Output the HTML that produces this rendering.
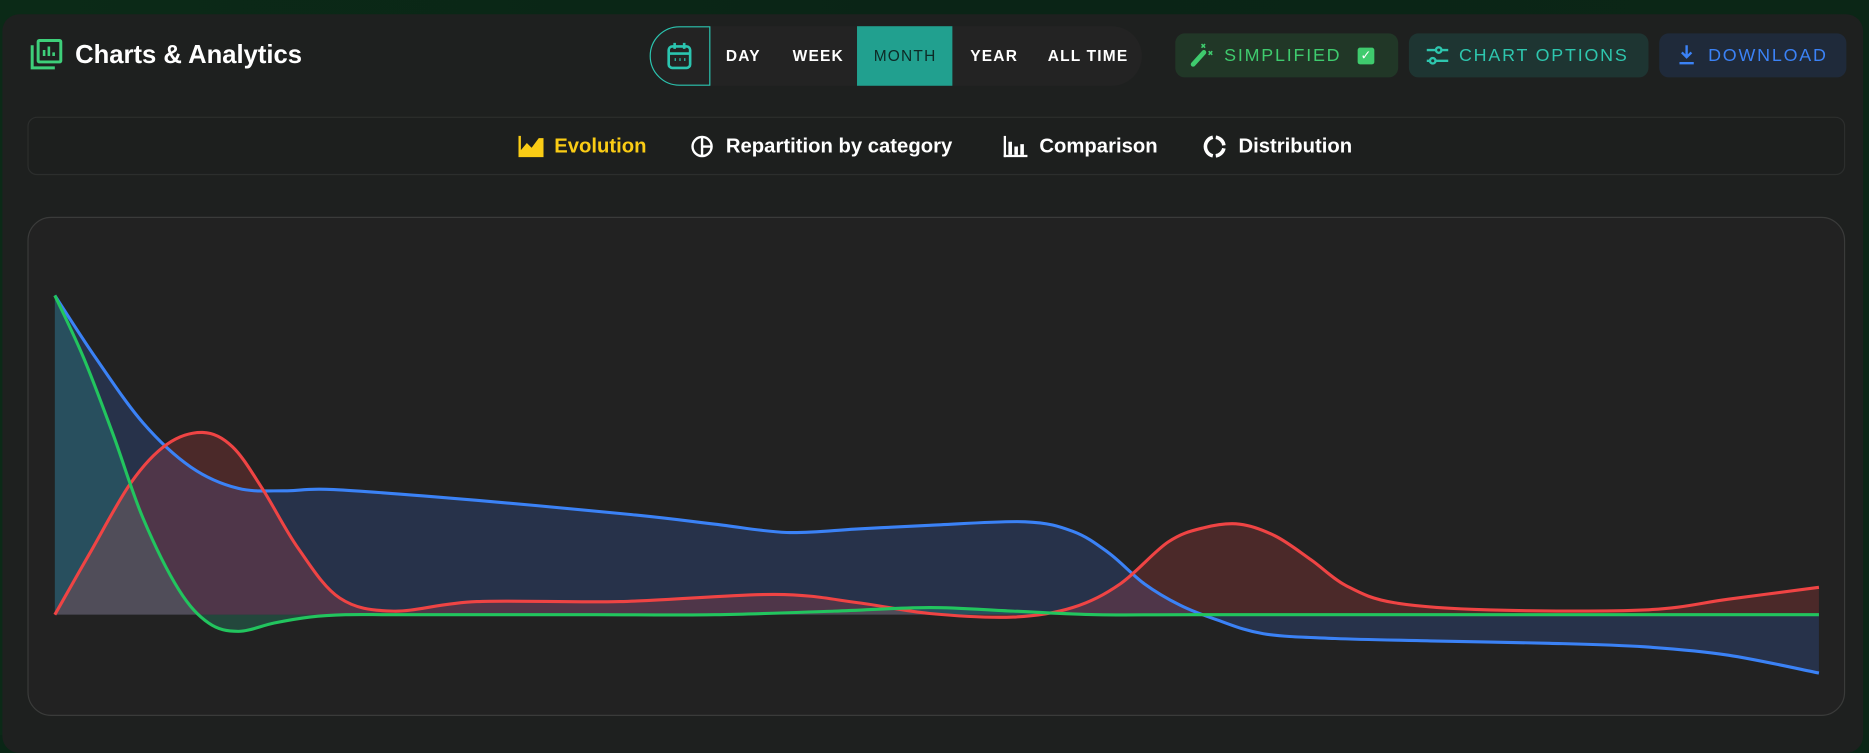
<!DOCTYPE html>
<html><head><meta charset="utf-8"><style>
html,body{margin:0;padding:0;width:1869px;height:735px;overflow:hidden;background:#0a2616;}
body{background:linear-gradient(90deg,#0b2a17,#0a2416 50%,#0b2616);}
#w{position:absolute;left:0;top:0;width:1568px;height:617px;transform:scale(1.19196,1.19125);transform-origin:0 0;font-family:"Liberation Sans",sans-serif;}
.card{position:absolute;left:2px;top:12px;width:1561px;height:620px;background:#1e201f;border-radius:14px;}
.title{position:absolute;left:63px;top:34px;color:#fff;font-size:21.5px;font-weight:bold;letter-spacing:0px;}
.grp{position:absolute;left:545px;top:22px;width:413px;height:50px;background:#232323;border-radius:25px;}
.cal{position:absolute;left:545px;top:22px;width:49px;height:48px;border:1px solid #2bc5b0;border-radius:25px 0 0 25px;}
.seg{position:absolute;top:22px;height:50px;line-height:50px;color:#fff;font-size:13px;font-weight:bold;letter-spacing:1px;}
.mon{position:absolute;left:719px;top:22px;width:80px;height:50px;background:#21a08f;}
.btn{position:absolute;top:28px;height:37px;border-radius:8px;font-size:15px;letter-spacing:1.5px;line-height:37px;}
.sub{position:absolute;left:23px;top:98px;width:1523px;height:47px;border:1px solid #2c2e2d;border-radius:8px;background:#1d1f1e;}
.tab{position:absolute;top:113px;font-size:17px;color:#fff;font-weight:bold;}
.chart{position:absolute;left:23px;top:182px;width:1523px;height:417px;border:1px solid #3a3b3a;border-radius:20px;background:#222222;}
</style></head><body><div id="w">
<div class="card"></div>
<svg style="position:absolute;left:25px;top:32px" width="28" height="28" viewBox="0 0 28 28" fill="none" stroke="#3ecf7a" stroke-width="2.5"><path d="M2 6v19h19"/><rect x="7" y="2" width="19" height="18" rx="1"/><path d="M12 15v-5M16 15V7M20 15v-3" stroke-width="2.2"/></svg>
<div class="title">Charts &amp; Analytics</div>
<div class="grp"></div><div class="mon"></div><div class="cal"></div>
<svg style="position:absolute;left:559px;top:35px" width="22" height="24" viewBox="0 0 22 24" fill="none" stroke="#2bc5b0" stroke-width="2.2"><rect x="2" y="4" width="18" height="18" rx="3"/><path d="M2 10h18M7 1v5M15 1v5"/><path d="M7 15h1M11 15h1M15 15h1" stroke-width="2.5"/></svg>
<div class="seg" style="left:609px">DAY</div>
<div class="seg" style="left:665px">WEEK</div>
<div class="seg" style="left:733px;color:#0d2a26;font-weight:normal">MONTH</div>
<div class="seg" style="left:814px">YEAR</div>
<div class="seg" style="left:879px">ALL TIME</div>
<div class="btn" style="left:986px;width:187px;background:#213727;color:#3fcb6e"><svg style="position:absolute;left:12px;top:8px" width="20" height="20" viewBox="0 0 20 20"><path d="M3 18l9-10" stroke="#3fcb6e" stroke-width="4" stroke-linecap="round"/><path d="M10 1l3 3M13 1l-3 3M16 7l3 3M19 7l-3 3" stroke="#3fcb6e" stroke-width="1.3"/></svg><span style="position:absolute;left:41px">SIMPLIFIED</span><span style="position:absolute;left:153px;top:12px;width:14px;height:14px;background:#3fcb6e;border-radius:2px;color:#fff;font-size:11px;line-height:14px;text-align:center;letter-spacing:0">✓</span></div>
<div class="btn" style="left:1182px;width:201px;background:#1e3532;color:#2ec6ae"><svg style="position:absolute;left:14px;top:9px" width="20" height="20" viewBox="0 0 20 20" fill="none" stroke="#2ec6ae" stroke-width="2"><path d="M1 5h8M13 5h6M1 14h3M8 14h11"/><circle cx="11" cy="5" r="2.3"/><circle cx="6" cy="14" r="2.3"/></svg><span style="position:absolute;left:42px">CHART OPTIONS</span></div>
<div class="btn" style="left:1392px;width:157px;background:#1f2a3a;color:#3b82f6"><svg style="position:absolute;left:15px;top:9px" width="16" height="18" viewBox="0 0 16 18" fill="none" stroke="#3b82f6" stroke-width="2"><path d="M8 1v10M4 7l4 4 4-4M2 16h12"/></svg><span style="position:absolute;left:41px">DOWNLOAD</span></div>
<div class="sub"></div>
<svg style="position:absolute;left:435px;top:114px" width="21" height="18" viewBox="0 0 21 18"><path d="M0 0h2v12l5-6 4 4 6-8 4 0v16H0z" fill="#facc15"/></svg>
<div class="tab" style="left:465px;color:#facc15">Evolution</div>
<svg style="position:absolute;left:579px;top:113px" width="20" height="20" viewBox="0 0 20 20" fill="none" stroke="#fff" stroke-width="2"><circle cx="10" cy="10" r="8"/><path d="M10 2v16M10 10h8"/></svg>
<div class="tab" style="left:609px">Repartition by category</div>
<svg style="position:absolute;left:842px;top:114px" width="20" height="18" viewBox="0 0 20 18" fill="#fff"><rect x="0" y="0" width="2" height="18"/><rect x="0" y="16" width="20" height="2"/><rect x="4" y="5" width="3" height="11"/><rect x="9" y="9" width="3" height="7"/><rect x="14" y="7" width="3" height="9"/></svg>
<div class="tab" style="left:872px">Comparison</div>
<svg style="position:absolute;left:1009px;top:113px" width="20" height="20" viewBox="0 0 20 20" fill="none" stroke="#fff" stroke-width="3"><path d="M11 2.2A8 8 0 0 1 17.8 9"/><path d="M17.8 11.5A8 8 0 0 1 11 17.8"/><path d="M8.5 17.8A8 8 0 0 1 8.5 2.2"/></svg>
<div class="tab" style="left:1039px">Distribution</div>
<div class="chart"></div>
<svg id="c" style="position:absolute;left:0;top:0" width="1568" height="617" viewBox="0 0 1568 617"></svg>
</div>
<script>
var B=516;
var blue=[[46,248],[80,300],[120,355],[160,392],[200,410],[240,412],[280,411],[400,420],[530,432],[600,440],[660,447],[720,444],[780,441],[860,438],[900,446],[930,464],[960,490],[990,508],[1020,520],[1060,532],[1120,536],[1200,538],[1300,540],[1380,543],[1450,550],[1526,565]];
var red=[[46,516],[75,465],[110,405],[140,373],[170,363],[195,375],[220,410],[250,460],[285,502],[330,513],[400,505],[520,505],[650,499],[720,506],[780,515],[850,518],[900,510],[940,490],[980,455],[1010,443],[1040,440],[1070,450],[1100,470],[1130,492],[1170,506],[1250,512],[1380,512],[1450,503],[1526,493]];
var green=[[46,248],[70,300],[95,365],[120,435],[150,495],[175,523],[200,530],[230,523],[260,518],[290,516],[330,516],[400,516],[500,516],[600,516],[700,513],[780,510],[850,513],[920,516],[1000,516],[1200,516],[1526,516]];
function path(p){var d="M"+p[0][0]+","+p[0][1];for(var i=0;i<p.length-1;i++){var p0=p[i-1]||p[i],p1=p[i],p2=p[i+1],p3=p[i+2]||p2;
d+=" C"+(p1[0]+(p2[0]-p0[0])/6).toFixed(1)+","+(p1[1]+(p2[1]-p0[1])/6).toFixed(1)+" "+(p2[0]-(p3[0]-p1[0])/6).toFixed(1)+","+(p2[1]-(p3[1]-p1[1])/6).toFixed(1)+" "+p2[0]+","+p2[1];}return d;}
var s="";
[[green,"rgba(40,170,130,0.28)","#22c55e"],[blue,"rgba(59,110,220,0.22)","#3b82f6"],[red,"rgba(239,68,68,0.2)","#ef4444"]].forEach(function(a){var d=path(a[0]);s+='<path d="'+d+' L1526,'+B+' L46,'+B+' Z" fill="'+a[1]+'"/>';});
[[blue,"#3b82f6"],[red,"#ef4444"],[green,"#22c55e"]].forEach(function(a){s+='<path d="'+path(a[0])+'" fill="none" stroke="'+a[1]+'" stroke-width="2.6"/>';});
document.getElementById("c").innerHTML=s;
</script>
</body></html>
